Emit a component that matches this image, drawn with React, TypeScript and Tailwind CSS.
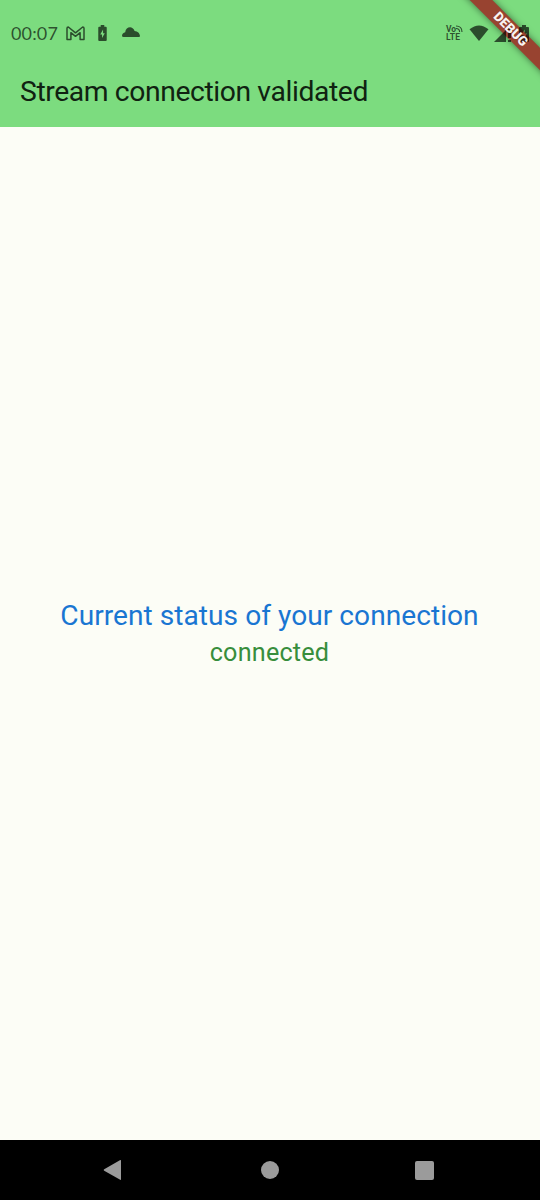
import React from "react";

function StatusBar() {
  return (
    <div className="relative z-20 flex h-[66px] items-center text-black/65">
      <span className="ml-[11px] w-[47px] whitespace-nowrap font-['Lato',sans-serif] text-[18px] leading-[20px] tracking-[0.15px]">00:07</span>
      <svg className="ml-2 h-[15px] w-[19px]" viewBox="0 0 19 15" fill="none" stroke="currentColor" strokeWidth="1.5" strokeLinejoin="round">
        <path d="M1 13.5V2.3Q1 1 2.3 1L9.5 6.8L16.7 1Q18 1 18 2.3V13.5H14.1V6.7L9.5 10.3L4.9 6.7V13.5Z" />
      </svg>
      <svg className="ml-[13px] h-[16px] w-[9px]" viewBox="0 0 9 17" fill="currentColor">
        <path fillRule="evenodd" d="M2.6 0H6.4V1.8H8Q9 1.8 9 2.8V16Q9 17 8 17H1Q0 17 0 16V2.8Q0 1.8 1 1.8H2.6ZM5.1 4.9L2.1 10H4V13.8L6.9 8.7H5.1Z" />
      </svg>
      <svg className="relative -top-px ml-[15px] h-[10px] w-[18px]" viewBox="0 0 18 10" fill="currentColor">
        <path d="M1.5 10Q0 10 0 8.8C0 6.8 1.4 5.6 3.2 5.2C3.7-.3 10.5-1.8 12.6 4C15.6 4.1 17.8 6.4 18 9Q18 10 17 10Z" />
      </svg>
      <div className="ml-auto flex items-center">
        <div className="relative w-[18px] font-['Roboto',sans-serif] text-[8.5px] font-bold leading-[8px]">
          <div>Vo</div>
          <div className="tracking-[0.2px]">LTE</div>
          <svg className="absolute left-[9px] top-0 h-2 w-[8px]" viewBox="0 0 8 8" fill="none" stroke="currentColor" strokeWidth="1.1">
            <path d="M1 1Q7 1 7 7M1 3.5Q4.6 3.5 4.6 7" />
          </svg>
        </div>
        <svg className="ml-[5px] h-4 w-[20px]" viewBox="0 0 20 16" fill="currentColor">
          <path d="M.5 4.3Q10-3.3 19.5 4.3L10 16Z" />
        </svg>
        <svg className="ml-[5px] h-[17px] w-[17px]" viewBox="0 0 17 17" fill="currentColor">
          <path d="M0 17L17 0V5H12V17ZM14 6H17V13H14ZM14 15H17V17H14Z" />
        </svg>
        <svg className="ml-[8px] mr-[11px] h-[17px] w-[10px]" viewBox="0 0 10 17" fill="currentColor">
          <path fillRule="evenodd" d="M3 0H7V2H9Q10 2 10 3V16Q10 17 9 17H1Q0 17 0 16V3Q0 2 1 2H3ZM5.7 4.6L2 10H4.5V14.4L8 8.5H5.7Z" />
        </svg>
      </div>
    </div>
  );
}

function DebugBanner() {
  return (
    <>
      <div className="absolute right-0 top-0 z-10 h-[100px] w-[100px] overflow-hidden">
        <div className="absolute left-[-11px] top-[20px] h-[16px] w-[160px] rotate-45 bg-[#984330] shadow-[0_0_7px_rgba(0,0,0,0.5)]" />
      </div>
      <div className="absolute right-0 top-0 z-30 h-[100px] w-[100px] overflow-hidden">
        <div className="absolute left-[-11px] top-[20px] flex h-[16px] w-[160px] rotate-45 items-center justify-center font-['Roboto',sans-serif] text-[13.2px] font-black leading-none text-white/95">
          <span className="relative left-[2px]">DEBUG</span>
        </div>
      </div>
    </>
  );
}

export default function App() {
  return (
    <div className="relative flex h-[1200px] w-[540px] flex-col overflow-hidden bg-[#fcfdf6] font-['Roboto',sans-serif]">
      <header className="h-[127px] bg-[#7cdc7f]">
        <StatusBar />
        <h1 className="pl-5 pt-2 text-[28.3px] leading-[36px] tracking-[-0.4px] text-[#102211]">Stream connection validated</h1>
      </header>
      <DebugBanner />
      <main className="flex flex-1 flex-col items-center justify-center whitespace-nowrap">
        <p className="relative -left-[0.5px] text-[28.1px] leading-[38px] tracking-[0.04px] text-[#1976d2]">Current status of your connection</p>
        <p className="relative -left-[0.5px] text-[25.2px] leading-[36px] tracking-[0.2px] text-[#388e3c]">connected</p>
      </main>
      <nav className="flex h-[60px] items-center bg-black text-[#9b9b9b]">
        <svg className="ml-[103px] h-[22px] w-[19px]" viewBox="0 0 19 22" fill="currentColor">
          <path d="M1.2 10.2L17.3 1Q18 .7 18 1.7V20.3Q18 21.3 17.2 20.8L1.2 11.7Q0 11 1.2 10.2Z" />
        </svg>
        <div className="ml-[139px] h-[18px] w-[18px] rounded-full bg-[#9b9b9b]" />
        <div className="ml-[136px] h-[19px] w-[19px] rounded-[2px] bg-[#9b9b9b]" />
      </nav>
    </div>
  );
}
